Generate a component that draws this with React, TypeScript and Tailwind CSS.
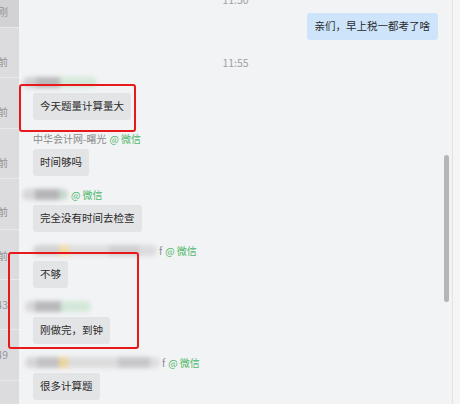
import React from 'react';

const FONT = "font-['Microsoft_YaHei','Noto_Sans_CJK_SC','Noto_Sans',sans-serif]";

const sideCells = [
    { h: 'h-[28px]', pt: 'pt-[5px]', text: '刚刚', bg: 'bg-[#d2d2d4]' },
    { h: 'h-[50px]', pt: 'pt-[27px]', text: '1分钟前', bg: 'bg-[#dcdcde]' },
    { h: 'h-[51px]', pt: 'pt-[27px]', text: '2分钟前', bg: 'bg-[#dcdcde]' },
    { h: 'h-[50px]', pt: 'pt-[27px]', text: '3分钟前', bg: 'bg-[#dcdcde]' },
    { h: 'h-[51px]', pt: 'pt-[26px]', text: '5分钟前', bg: 'bg-[#dcdcde]' },
    { h: 'h-[50px]', pt: 'pt-[19px]', text: '8分钟前', bg: 'bg-[#dcdcde]' },
    { h: 'h-[50px]', pt: 'pt-[18px]', text: '11:43', bg: 'bg-[#dcdcde]' },
    { h: 'h-[51px]', pt: 'pt-[18px]', text: '11:49', bg: 'bg-[#dcdcde]' },
    { h: 'h-[50px]', pt: 'pt-[18px]', text: '', bg: 'bg-[#dcdcde]' },
];

const WeChatTag = () => (
    <span className="text-[#4fb86a] ml-[3px] flex items-center gap-[2px]">
        <span className="text-[10px]">@</span>
        <span>微信</span>
    </span>
);

const Bubble = ({ children }: { children: React.ReactNode }) => (
    <div className="self-start shrink-0 h-[27px] px-[7px] flex items-center rounded-[3px] bg-[#e3e4e6] text-[#2b2b2b] text-[10.5px] leading-none">
        {children}
    </div>
);

// blurred name, rebuilt from coloured smudges
const Smudge = ({ parts }: { parts: { w: string; c: string }[] }) => (
    <span className="flex items-center blur-[2px]">
        {parts.map((p, i) => (
            <span key={i} className={`inline-block h-[11px] ${p.w} ${p.c}`} />
        ))}
    </span>
);

const Message = ({ name, text }: { name: React.ReactNode; text: string }) => (
    <div className="shrink-0 flex flex-col">
        <div className="shrink-0 h-[14px] flex items-center text-[10px] text-[#8a8a8a] whitespace-nowrap">{name}</div>
        <div className="shrink-0 h-[4px]" />
        <Bubble>{text}</Bubble>
        <div className="shrink-0 h-[11px]" />
    </div>
);

export default function App() {
    return (
        <div className={`relative w-[460px] h-[404px] overflow-hidden flex bg-[#f2f3f5] ${FONT}`}>
            {/* session list edge */}
            <div className="w-[19px] shrink-0 flex flex-col">
                {sideCells.map((c, i) => (
                    <div key={i} className={`${c.h} ${c.pt} ${c.bg} shrink-0 border-b border-[#e8e8ea] flex justify-end pr-[11px] overflow-hidden`}>
                        <span className="text-[10.5px] leading-[14px] text-[#959597] whitespace-nowrap">{c.text}</span>
                    </div>
                ))}
            </div>

            {/* chat area */}
            <div className="relative flex-1 flex flex-col px-[14px]">
                <div className="shrink-0 -mt-[7px] h-[14px] text-center text-[10.5px] leading-[14px] text-[#a0a0a2]">11:50</div>
                <div className="shrink-0 mt-[6px] self-end h-[27px] px-[8px] flex items-center rounded-[3px] bg-[#cde4fb] text-[#2b2b2b] text-[10.5px] leading-none">
                    亲们，早上税一都考了啥
                </div>
                <div className="shrink-0 mt-[16px] h-[14px] text-center text-[10.5px] leading-[14px] text-[#a0a0a2]">11:55</div>
                <div className="shrink-0 mt-[5px] flex flex-col">
                    <Message
                        name={<span className="-ml-[10px]"><Smudge parts={[{ w: 'w-[13px]', c: 'bg-[#d0d0d2] rounded-l-full' }, { w: 'w-[24px]', c: 'bg-[#b9b9bb]' }, { w: 'w-[37px]', c: 'bg-[#d3e9d8] rounded-r-full' }]} /></span>}
                        text="今天题量计算量大"
                    />
                    <Message
                        name={<><span>中华会计网-曙光</span><WeChatTag /></>}
                        text="时间够吗"
                    />
                    <Message
                        name={<><span className="-ml-[11px]"><Smudge parts={[{ w: 'w-[13px]', c: 'bg-[#d6d6d8] rounded-l-full' }, { w: 'w-[24px]', c: 'bg-[#b4b4b6]' }, { w: 'w-[9px]', c: 'bg-[#c6d9cb] rounded-r-full' }]} /></span><WeChatTag /></>}
                        text="完全没有时间去检查"
                    />
                    <Message
                        name={<><Smudge parts={[{ w: 'w-[26px]', c: 'bg-[#d2d2d4] rounded-l-full' }, { w: 'w-[10px]', c: 'bg-[#eedca8]' }, { w: 'w-[40px]', c: 'bg-[#dededf]' }, { w: 'w-[30px]', c: 'bg-[#cfcfd1]' }, { w: 'w-[18px]', c: 'bg-[#dcdcde] rounded-r-full' }]} /><span className="ml-[2px]">f</span><WeChatTag /></>}
                        text="不够"
                    />
                    <Message
                        name={<span className="-ml-[8px]"><Smudge parts={[{ w: 'w-[10px]', c: 'bg-[#d8d8da] rounded-l-full' }, { w: 'w-[26px]', c: 'bg-[#b9b9bb]' }, { w: 'w-[30px]', c: 'bg-[#d3e8d8] rounded-r-full' }]} /></span>}
                        text="刚做完，到钟"
                    />
                    <Message
                        name={<><span className="-ml-[8px]"><Smudge parts={[{ w: 'w-[12px]', c: 'bg-[#d6d6d8] rounded-l-full' }, { w: 'w-[22px]', c: 'bg-[#c2c2c4]' }, { w: 'w-[9px]', c: 'bg-[#ebd59c]' }, { w: 'w-[50px]', c: 'bg-[#dcdcdd]' }, { w: 'w-[32px]', c: 'bg-[#c8c8ca]' }, { w: 'w-[10px]', c: 'bg-[#dededf] rounded-r-full' }]} /></span><span className="ml-[2px]">f</span><WeChatTag /></>}
                        text="很多计算题"
                    />
                </div>

                {/* scrollbar */}
                <div className="absolute right-[3px] top-[155px] w-[5px] h-[147px] rounded-full bg-[#b5b6ba]" />
            </div>

            {/* window edge */}
            <div className="w-[8px] shrink-0 border-l border-[#e2e3e5] bg-[#f5f5f6]" />

            {/* red annotation boxes */}
            <div className="absolute left-[19px] top-[84px] w-[117px] h-[48px] border-2 border-[#e8191b] rounded-[3px]" />
            <div className="absolute left-[8px] top-[252px] w-[131px] h-[97px] border-2 border-[#e8191b] rounded-[3px]" />
        </div>
    );
}
